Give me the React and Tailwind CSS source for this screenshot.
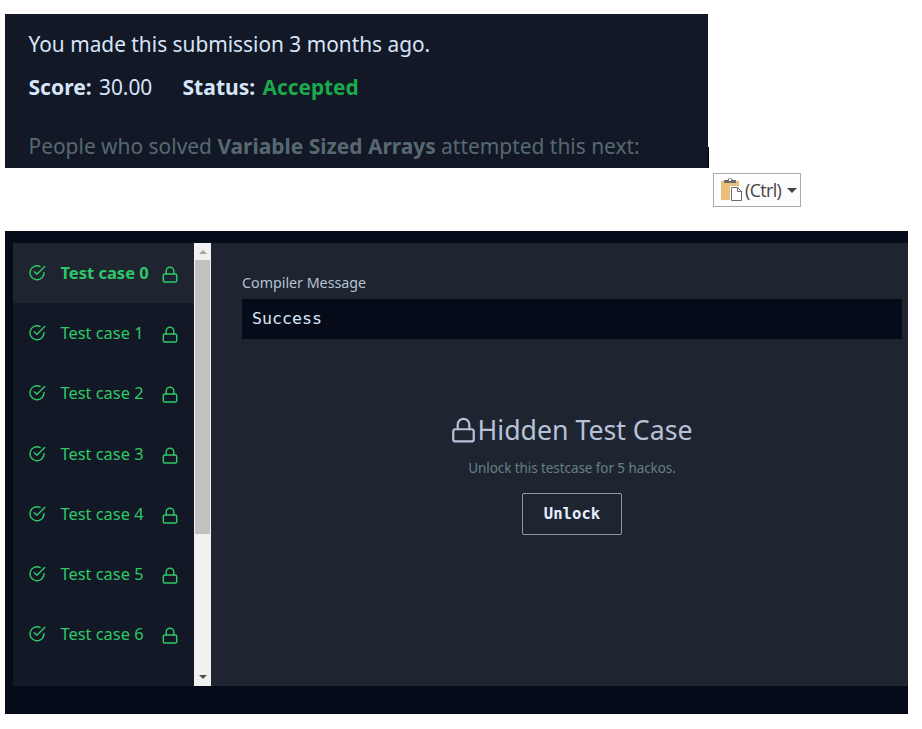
const SANS = "font-['Noto_Sans','Open_Sans',sans-serif]";

function CheckIcon() {
  return (
    <svg className="block h-4 w-[17px] shrink-0" viewBox="0 0 17 16" fill="none" stroke="currentColor" strokeWidth="1.45" strokeLinecap="round" strokeLinejoin="round">
      <path d="M11 1.5A7 7 0 1 0 15 7.6" />
      <path d="M5.3 6.8 7.9 9.300 15.7 1.600" />
    </svg>
  );
}

function LockIcon({ className, strokeWidth }) {
  return (
    <svg className={className} viewBox="0 0 16 17" fill="none" stroke="currentColor" strokeWidth={strokeWidth} strokeLinecap="round" strokeLinejoin="round">
      <rect x="1.3" y="8" width="13.4" height="8" rx="1.5" />
      <path d="M4.200 8V5a3.800 3.800 0 0 1 7.600 0V8" />
    </svg>
  );
}

function PasteIcon() {
  return (
    <svg className="block h-6 w-[22px] shrink-0" viewBox="0 0 22 24">
      <path d="M0 3h18v19H0z" fill="#e9bf7c" />
      <path d="M3 5V2h3.200a3 2.600 0 0 1 5.600 0H15v3z" fill="#6a6a6a" />
      <rect x="8" y="1" width="2" height="2" fill="#fff" />
      <path d="M9 8h8l5 5v11H9z" fill="#fdfdfd" />
      <path d="M10.500 9.500h6l4 4v9h-10z M16.500 9.500v4h4" fill="#fff" stroke="#6a6a6a" />
    </svg>
  );
}

function TestCase({ index, active }) {
  return (
    <div className={`flex h-[60.2px] shrink-0 items-center pl-[15.500px] text-[#2ec866] ${active ? "bg-[#1e2531] font-bold" : ""}`}>
      <CheckIcon />
      <span className={`ml-[15px] w-[101px] whitespace-nowrap leading-6 ${active ? "text-[16.500px]" : "text-[16.400px]"}`}>
        Test case {index}
      </span>
      <LockIcon className="mt-[3px] block h-[17px] w-4 shrink-0" strokeWidth="1.45" />
    </div>
  );
}

export default function App() {
  return (
    <div className={`h-[729px] w-[922px] overflow-hidden bg-white pl-[5px] pt-[14px] ${SANS}`}>
      <div className="flex items-end">
        <section className="h-[154px] w-[703px] bg-[#121826] pl-[23.500px] pt-[14px] text-[20.850px] leading-8 whitespace-nowrap text-[#d7e5f9]">
          <p>You made this submission 3 months ago.</p>
          <p className="mt-[11px] flex">
            <b className="w-[70.500px] text-[21.100px]">Score:</b>
            <span className="w-[83.500px]">30.00</span>
            <b className="w-[80px] text-[21.100px]">Status:</b>
            <b className="text-[#1ba94c]">Accepted</b>
          </p>
          <p className="mt-[27px] text-[20.930px] text-[#576871]">
            People who solved <b>Variable Sized Arrays</b> attempted this next:
          </p>
        </section>
        <div className="h-[21px] w-px bg-black" />
      </div>

      <div className="ml-[708px] mt-[5px] flex h-[34px] w-[88px] items-center border border-[#ababab] bg-[#fdfdfd] pl-[7px]">
        <PasteIcon />
        <span className="ml-[2px] w-[42px] whitespace-nowrap font-['Open_Sans',sans-serif] text-[17.800px] leading-6 tracking-[-0.6px] text-[#444]">(Ctrl)</span>
        <svg className="block h-[5px] w-[10px] shrink-0" viewBox="0 0 10 5"><path d="M0 0h10L5 5z" fill="#444" /></svg>
      </div>

      <section className="mt-6 h-[483px] w-[903px] bg-[#050b18] pl-2 pt-3">
        <div className="flex h-[443px]">
          <aside className="flex w-[181px] flex-col overflow-hidden bg-[#121826]">
            {[0, 1, 2, 3, 4, 5, 6].map((n) => (
              <TestCase key={n} index={n} active={n === 0} />
            ))}
          </aside>
          <div className="flex w-[17px] flex-col items-center bg-[#f1f1f1]">
            <svg className="mt-[7px] block h-1 w-2 shrink-0" viewBox="0 0 8 4"><path d="M0 4h8L4 0z" fill="#a3a3a3" /></svg>
            <div className="mt-[6px] h-[274px] w-[15px] bg-[#c1c1c1]" />
            <svg className="mb-[7px] mt-auto block h-1 w-2 shrink-0" viewBox="0 0 8 4"><path d="M0 0h8L4 4z" fill="#505050" /></svg>
          </div>
          <main className="flex w-[697px] flex-col bg-[#1e2531] pl-[31px]">
            <h2 className="mt-[30px] text-[14.250px] leading-5 text-[#b7c2d3]">Compiler Message</h2>
            <div className="mt-[6px] h-10 w-[660px] bg-[#050b18] pl-[10px] font-['DejaVu_Sans_Mono',monospace] text-[16.600px] leading-[39px] text-[#d7e5f9]">Success</div>
            <div className="mt-[69px] flex w-[660px] flex-col items-center">
              <div className="flex h-[44px] items-center text-[26.700px] whitespace-nowrap text-[#b7c2d9]">
                <LockIcon className="mb-px block h-[26px] w-[25px] shrink-0" strokeWidth="1.45" />
                <span className="ml-px">Hidden Test Case</span>
              </div>
              <p className="mt-[6px] text-[13.500px] leading-5 tracking-[-0.08px] whitespace-nowrap text-[#667f86]">Unlock this testcase for 5 hackos.</p>
              <button className="mt-[15px] h-[42px] w-[100px] rounded-[2px] border border-[#8a99a5] font-['DejaVu_Sans_Mono',monospace] text-[15.600px] leading-6 font-bold text-[#e6efff]">Unlock</button>
            </div>
          </main>
        </div>
      </section>
    </div>
  );
}
